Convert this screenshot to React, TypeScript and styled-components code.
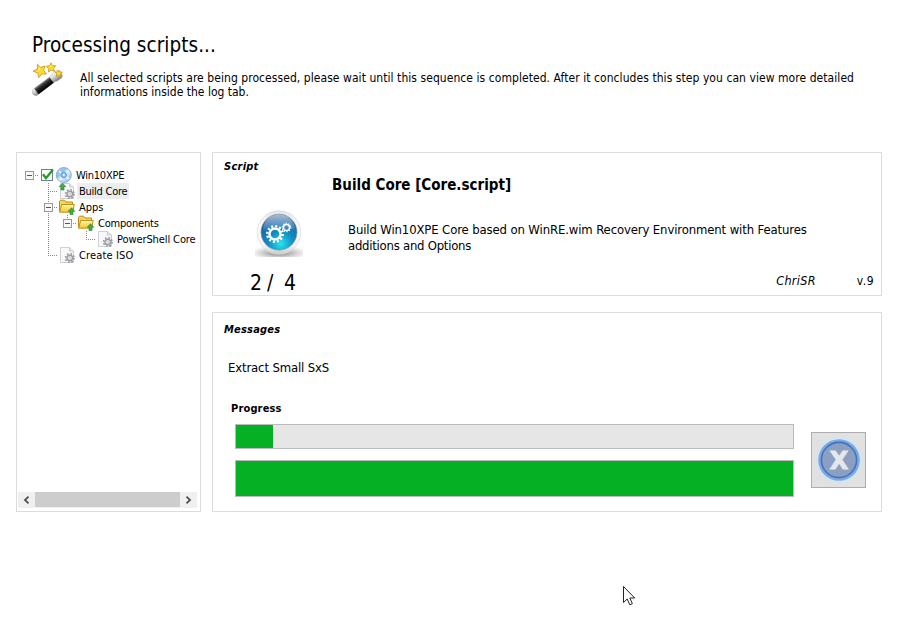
import React from "react";
import styled, { createGlobalStyle } from "styled-components";

const GlobalStyle = createGlobalStyle`
  * { box-sizing: border-box; }
  body {
    margin: 0;
    background: #fff;
    color: #000;
    font-family: "DejaVu Sans Condensed", "DejaVu Sans", Tahoma, sans-serif;
    font-stretch: condensed;
    font-size: 12px;
    cursor: default;
  }
  svg { display: block; flex: none; }
`;

const Page = styled.div`
  position: relative;
  width: 902px;
  height: 634px;
  overflow: hidden;
  padding: 32px 20px 0 16px;
`;

const Header = styled.header`
  height: 120px;
  padding-left: 16px;
`;

const Title = styled.h1`
  margin: 0;
  font-size: 20.5px;
  font-weight: normal;
  line-height: 27px;
  letter-spacing: 0.05px;
`;

const Intro = styled.div`
  display: flex;
  align-items: flex-start;
  gap: 15px;
  padding-top: 3px;
`;

const IntroText = styled.div`
  padding-top: 9px;
  line-height: 14px;
`;

const TextLine = styled.div<{ $spacing?: number }>`
  white-space: nowrap;
  letter-spacing: ${(p) => p.$spacing ?? 0}px;
`;

const Columns = styled.main`
  display: flex;
  gap: 11px;
  height: 360px;
`;

const Panel = styled.section`
  border: 1px solid #dcdcdc;
  background: #fff;
`;

const TreePanel = styled(Panel)`
  display: flex;
  flex-direction: column;
  justify-content: space-between;
  width: 185px;
  padding: 14px 3px 3px 1px;
`;

const TreeList = styled.div`
  padding-left: 2px;
`;

const TreeRow = styled.div`
  display: flex;
  align-items: center;
  height: 16px;
`;

const TreeIcon = styled.span<{ $width: number }>`
  display: flex;
  flex: none;
  width: ${(p) => p.$width}px;
`;

const TreeLabel = styled.span<{ $selected?: boolean; $spacing?: number }>`
  height: 16px;
  padding: 1px 2px 0;
  font-size: 11px;
  line-height: 16px;
  white-space: nowrap;
  letter-spacing: ${(p) => p.$spacing ?? 0}px;
  background: ${(p) => (p.$selected ? "#ededed" : "transparent")};
`;

const ScrollBar = styled.div`
  display: flex;
  height: 16px;
  background: #f0f0f0;
`;

const ScrollButton = styled.div`
  display: flex;
  align-items: center;
  justify-content: center;
  width: 17px;
`;

const ScrollThumb = styled.div`
  flex: 1;
  height: 15px;
  background: #cdcdcd;
`;

const Details = styled.div`
  display: flex;
  flex-direction: column;
  gap: 16px;
  width: 670px;
`;

const ScriptPanel = styled(Panel)`
  height: 144px;
  padding: 6px 7px 0 11px;
`;

const MessagesPanel = styled(Panel)`
  height: 200px;
  padding: 9px 15px 0 11px;
`;

const Caption = styled.h2<{ $italic?: boolean; $spacing: number }>`
  margin: 0;
  font-size: 11px;
  font-weight: bold;
  font-style: ${(p) => (p.$italic ? "italic" : "normal")};
  line-height: 16px;
  letter-spacing: ${(p) => p.$spacing}px;
`;

const ScriptBody = styled.div`
  display: grid;
  grid-template-columns: 108px 1fr;
  height: 120px;
`;

const Status = styled.div`
  padding: 34px 0 0 31px;
`;

const Counter = styled.div`
  margin: 11px 0 0 -5px;
  font-size: 21px;
  line-height: 30px;
  letter-spacing: -0.5px;
  white-space: pre;
`;

const ScriptTitle = styled.h3`
  margin: 0;
  font-size: 15px;
  line-height: 20px;
`;

const Description = styled.div`
  height: 51px;
  margin: 27px 0 0 16px;
  font-size: 13px;
  line-height: 16px;
`;

const Meta = styled.div`
  display: flex;
  justify-content: flex-end;
  gap: 41px;
  line-height: 16px;
`;

const Author = styled.span`
  font-size: 12.5px;
  font-style: italic;
  letter-spacing: 0.3px;
`;

const Version = styled.span`
  letter-spacing: 0.5px;
`;

const Message = styled.p`
  margin: 21px 0 0 4px;
  font-size: 13px;
  line-height: 18px;
  letter-spacing: -0.15px;
`;

const ProgressLabel = styled.div`
  margin: 24px 0 0 7px;
`;

const ProgressArea = styled.div`
  display: flex;
  gap: 17px;
  margin: 7px 0 0 11px;
`;

const Bars = styled.div`
  display: flex;
  flex-direction: column;
  gap: 11px;
`;

const Bar = styled.div<{ $height: number }>`
  width: 559px;
  height: ${(p) => p.$height}px;
  border: 1px solid #bcbcbc;
  background: #e6e6e6;
`;

const Fill = styled.div<{ $width: string }>`
  width: ${(p) => p.$width};
  height: 100%;
  background: #06b025;
`;

const CancelButton = styled.button`
  display: flex;
  align-items: center;
  justify-content: center;
  width: 55px;
  height: 56px;
  margin-top: 8px;
  padding: 0;
  border: 1px solid #adadad;
  background: #e1e1e1;
`;

const Pointer = styled.div`
  position: absolute;
  left: 622px;
  top: 585px;
`;

type GuideKind = "empty" | "through" | "tee" | "elbow" | "root" | "open" | "openLast";

/* One 19px indent cell with its dotted connector lines and optional expander */
function Guide({ kind }: { kind: GuideKind }) {
  const box = kind === "root" || kind === "open" || kind === "openLast";
  const top = kind !== "empty" && kind !== "root";
  const bottom = kind === "through" || kind === "tee" || kind === "open";
  const across = kind !== "empty" && kind !== "through";
  return (
    <svg width="19" height="16" viewBox="0 0 19 16" shapeRendering="crispEdges">
      <g stroke="#888" strokeDasharray="1 1" fill="none">
        {top && <path d="M9.5 0V8" />}
        {bottom && <path d="M9.5 8V16" />}
        {across && <path d="M9 8.5H19" />}
      </g>
      {box && (
        <g>
          <rect x="5.5" y="4.5" width="8" height="8" rx="1" fill="#f8f8f8" stroke="#999" />
          <path d="M7 8.5H12" stroke="#3c55a0" />
        </g>
      )}
    </svg>
  );
}

const CheckIcon = () => (
  <svg width="16" height="16" viewBox="0 0 16 16">
    <rect x="2.5" y="2.5" width="11" height="11" fill="#fff" stroke="#6d7f8e" />
    <path d="M4 7.2L7 11.2L14 2.5" fill="none" stroke="#239b26" strokeWidth="2.3" />
  </svg>
);

const DiscIcon = () => (
  <svg width="18" height="16" viewBox="0 0 18 16">
    <defs>
      <linearGradient id="disc" x2="1" y2="1">
        <stop stopColor="#b7daf5" />
        <stop offset=".35" stopColor="#8fc0eb" />
        <stop offset=".5" stopColor="#e5f4ff" />
        <stop offset="1" stopColor="#76aee0" />
      </linearGradient>
    </defs>
    <circle cx="8.8" cy="8" r="7.5" fill="url(#disc)" stroke="#6ca0d2" strokeWidth=".8" />
    <path d="M4 4L7 7M10.5 9.5L14 12" stroke="#eef9ff" strokeWidth="1.6" />
    <circle cx="8.8" cy="8" r="2.7" fill="#8dbdf0" stroke="#5692d0" strokeWidth=".8" />
    <circle cx="8.8" cy="8" r="1" fill="#fff" />
  </svg>
);

const UpArrow = ({ x, y }: { x: number; y: number }) => (
  <path
    transform={`translate(${x} ${y})`}
    d="M3.5 .3L6.8 3.8H5V7H2V3.8H.2Z"
    fill="#43ad45"
    stroke="#237d2c"
    strokeWidth=".6"
  />
);

const ScriptIcon = ({ arrow }: { arrow?: boolean }) => (
  <svg width="18" height="16" viewBox="0 0 18 16">
    <path d="M2.5 .5H11.5L15.5 4V15.5H2.5Z" fill="#f8f8fa" stroke="#cdd0d5" />
    <path d="M11.5 .5V4H15.5" fill="#e6e8ed" stroke="#c5c8ce" />
    <circle cx="11.8" cy="11" r="4.3" fill="none" stroke="#909296" strokeWidth="1.5" strokeDasharray="1.65 1.73" />
    <circle cx="11.8" cy="11" r="2.8" fill="#eee" stroke="#999ba0" strokeWidth="1.4" />
    <circle cx="11.8" cy="11" r="1" fill="#fff" stroke="#aaa" strokeWidth=".5" />
    {arrow && <UpArrow x={1} y={-0.1} />}
  </svg>
);

const FolderIcon = () => (
  <svg width="18" height="16" viewBox="0 0 18 16">
    <defs>
      <linearGradient id="folder" x2="0" y2="1">
        <stop stopColor="#fff3a4" />
        <stop offset="1" stopColor="#f3c72e" />
      </linearGradient>
    </defs>
    <path d="M1.5 12V2.2L2.5 1.2H6.5L8 3H14.5V12Z" fill="#f6d454" stroke="#bd8c1c" />
    <path d="M1.6 13.2L3.7 5.5H16.3L14.6 13.2Z" fill="url(#folder)" stroke="#c09020" />
    <path d="M4.5 6.5H15" stroke="#fffbd1" strokeWidth=".8" />
    <UpArrow x={10} y={8.5} />
  </svg>
);

const WandIcon = () => (
  <svg width="33" height="34" viewBox="0 0 33 34">
    <defs>
      <linearGradient id="silver" x2="0" y2="1">
        <stop stopColor="#fff" />
        <stop offset=".5" stopColor="#c9c9c9" />
        <stop offset="1" stopColor="#777" />
      </linearGradient>
      <linearGradient id="shaft" x2="0" y2="1">
        <stop stopColor="#777" />
        <stop offset=".35" stopColor="#2b2b2b" />
        <stop offset="1" stopColor="#000" />
      </linearGradient>
    </defs>
    <g transform="rotate(-37 15 21)">
      <path d="M-1 17.8H22L25 16.8H30Q32.5 17.5 32.5 21Q32.5 24.8 30 25.6H25L22 24.8H-1Q-3 24 -3 21.3Q-3 18.5 -1 17.8Z" fill="url(#silver)" stroke="#aaa" strokeWidth=".5" />
      <rect x="1.5" y="17.8" width="19" height="7" fill="url(#shaft)" />
    </g>
    <g fill="#ffd92f" stroke="#c79412" strokeWidth=".8" strokeLinejoin="round">
      <path d="M5.4 2.3L8.5 5.3L13.2 4L11.6 8.3L14.5 12L9.8 12L6.6 15.7L5.8 11L1.2 9.2L5.5 7Z" />
      <path d="M19 .8L20.3 3.7L23.8 3.8L21.5 6.2L22.5 9.5L19.2 8L16.5 10L16.8 6.6L14.4 4.3L17.8 3.7Z" />
      <path d="M26.7 8.2L27.7 10L30.3 10L28.5 12L29 14.6L26.7 13.4L24.4 14.3L24.8 11.8L23.2 10L25.7 9.9Z" />
    </g>
    <path d="M6.3 4.7L8 7L6.5 9M18.8 3L19.5 5" fill="none" stroke="#fff2a0" />
  </svg>
);

/* Toothed wheel with a hollow centre */
const Gear = ({ x, y, r, teeth }: { x: number; y: number; r: number; teeth: number }) => {
  const step = (2 * Math.PI * r * 0.87) / teeth / 2;
  return (
    <g fill="none" stroke="#fff">
      <circle cx={x} cy={y} r={r * 0.87} strokeWidth={r * 0.26} strokeDasharray={`${step} ${step}`} />
      <circle cx={x} cy={y} r={r * 0.62} strokeWidth={r * 0.28} />
    </g>
  );
};

const GearsOrb = () => (
  <svg width="48" height="48" viewBox="0 0 48 48">
    <defs>
      <linearGradient id="rim" x2="0" y2="1">
        <stop stopColor="#e2e3e6" />
        <stop offset=".3" stopColor="#fafafa" />
        <stop offset=".8" stopColor="#f5f5f5" />
        <stop offset="1" stopColor="#c8c8c8" />
      </linearGradient>
      <radialGradient id="orb" cx=".55" cy=".82" r=".8">
        <stop stopColor="#29e2ee" />
        <stop offset=".42" stopColor="#108fc4" />
        <stop offset=".8" stopColor="#1d66a6" />
        <stop offset="1" stopColor="#285891" />
      </radialGradient>
      <linearGradient id="gloss" x2="0" y2="1">
        <stop stopColor="#fff" stopOpacity=".6" />
        <stop offset="1" stopColor="#fff" stopOpacity=".08" />
      </linearGradient>
      <radialGradient id="shadow">
        <stop stopColor="#555" stopOpacity=".8" />
        <stop offset="1" stopColor="#999" stopOpacity="0" />
      </radialGradient>
    </defs>
    <ellipse cx="24" cy="44" rx="30" ry="7.5" fill="url(#shadow)" />
    <circle cx="24" cy="23.5" r="21.8" fill="url(#rim)" stroke="#dadada" strokeWidth=".7" />
    <circle cx="24" cy="23.2" r="18" fill="url(#orb)" stroke="#87979f" strokeWidth=".6" />
    <path d="M8 20.5C8.5 .5 39.5 .5 40 20.5C30.5 17.5 17.5 22.5 8 20.5Z" fill="url(#gloss)" />
    <Gear x={20} y={25} r={9} teeth={12} />
    <Gear x={31.5} y={18.5} r={4.8} teeth={10} />
  </svg>
);

const CancelIcon = () => (
  <svg width="46" height="46" viewBox="0 0 46 46">
    <circle cx="23" cy="23" r="22.3" fill="#c9e8f8" />
    <circle cx="23" cy="23" r="20.8" fill="#80a9df" />
    <circle cx="23" cy="23" r="17.6" fill="#8b9fc2" stroke="#3f74c2" strokeWidth="1.6" />
    <text
      x="23"
      y="31.7"
      textAnchor="middle"
      fontFamily="DejaVu Sans"
      fontSize="24"
      fontWeight="bold"
      fill="#e4e7eb"
      stroke="#e4e7eb"
      strokeWidth="1"
    >
      X
    </text>
  </svg>
);

const Chevron = ({ right }: { right?: boolean }) => (
  <svg width="7" height="8" viewBox="0 0 7 8">
    <path d={right ? "M1.5 .7L5 4L1.5 7.3" : "M5.5 .7L2 4L5.5 7.3"} fill="none" stroke="#505050" strokeWidth="1.8" />
  </svg>
);

const tree: { guides: GuideKind[]; icon: "disc" | "folder" | "script" | "update"; label: string; spacing: number }[] = [
  { guides: ["root"], icon: "disc", label: "Win10XPE", spacing: -0.25 },
  { guides: ["empty", "tee"], icon: "update", label: "Build Core", spacing: -0.25 },
  { guides: ["empty", "open"], icon: "folder", label: "Apps", spacing: 0 },
  { guides: ["empty", "through", "openLast"], icon: "folder", label: "Components", spacing: -0.2 },
  { guides: ["empty", "through", "empty", "elbow"], icon: "script", label: "PowerShell Core", spacing: -0.1 },
  { guides: ["empty", "elbow"], icon: "script", label: "Create ISO", spacing: 0.15 },
];

export default function App() {
  return (
    <Page>
      <GlobalStyle />
      <Header>
        <Title>Processing scripts...</Title>
        <Intro>
          <WandIcon />
          <IntroText>
            <TextLine $spacing={0.06}>
              All selected scripts are being processed, please wait until this sequence is completed. After it concludes this step you can view more detailed
            </TextLine>
            <TextLine>informations inside the log tab.</TextLine>
          </IntroText>
        </Intro>
      </Header>
      <Columns>
        <TreePanel>
          <TreeList>
            {tree.map((node) => (
              <TreeRow key={node.label}>
                {node.guides.map((kind, i) => (
                  <Guide key={i} kind={kind} />
                ))}
                {node.icon === "disc" && (
                  <TreeIcon $width={16}>
                    <CheckIcon />
                  </TreeIcon>
                )}
                <TreeIcon $width={19}>
                  {node.icon === "disc" && <DiscIcon />}
                  {node.icon === "folder" && <FolderIcon />}
                  {node.icon === "script" && <ScriptIcon />}
                  {node.icon === "update" && <ScriptIcon arrow />}
                </TreeIcon>
                <TreeLabel $selected={node.label === "Build Core"} $spacing={node.spacing}>
                  {node.label}
                </TreeLabel>
              </TreeRow>
            ))}
          </TreeList>
          <ScrollBar>
            <ScrollButton>
              <Chevron />
            </ScrollButton>
            <ScrollThumb />
            <ScrollButton>
              <Chevron right />
            </ScrollButton>
          </ScrollBar>
        </TreePanel>
        <Details>
          <ScriptPanel>
            <Caption $italic $spacing={0.25}>Script</Caption>
            <ScriptBody>
              <Status>
                <GearsOrb />
                <Counter>{"2 /  4"}</Counter>
              </Status>
              <div>
                <ScriptTitle>Build Core [Core.script]</ScriptTitle>
                <Description>
                  <TextLine $spacing={-0.13}>
                    Build Win10XPE Core based on WinRE.wim Recovery Environment with Features
                  </TextLine>
                  <TextLine $spacing={-0.25}>additions and Options</TextLine>
                </Description>
                <Meta>
                  <Author>ChriSR</Author>
                  <Version>v.9</Version>
                </Meta>
              </div>
            </ScriptBody>
          </ScriptPanel>
          <MessagesPanel>
            <Caption $italic $spacing={0.2}>Messages</Caption>
            <Message>Extract Small SxS</Message>
            <ProgressLabel>
              <Caption $spacing={0.15}>Progress</Caption>
            </ProgressLabel>
            <ProgressArea>
              <Bars>
                <Bar $height={25}>
                  <Fill $width="37px" />
                </Bar>
                <Bar $height={37}>
                  <Fill $width="100%" />
                </Bar>
              </Bars>
              <CancelButton aria-label="Cancel">
                <CancelIcon />
              </CancelButton>
            </ProgressArea>
          </MessagesPanel>
        </Details>
      </Columns>
      <Pointer>
        <svg width="14" height="22" viewBox="0 0 14 22">
          <path d="M1.5 1.5V17.5L5.2 14L7.8 19.8L10.4 18.6L7.8 13H12.7Z" fill="#fff" stroke="#222" />
        </svg>
      </Pointer>
    </Page>
  );
}
